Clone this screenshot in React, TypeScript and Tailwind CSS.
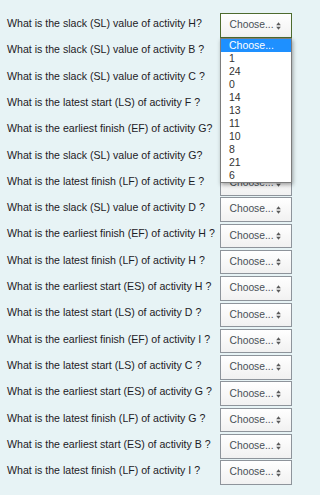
import React from "react";

const rows = [
  "What is the slack (SL) value of activity H?",
  "What is the slack (SL) value of activity B ?",
  "What is the slack (SL) value of activity C ?",
  "What is the latest start (LS) of activity F ?",
  "What is the earliest finish (EF) of activity G?",
  "What is the slack (SL) value of activity G?",
  "What is the latest finish (LF) of activity E ?",
  "What is the slack (SL) value of activity D ?",
  "What is the earliest finish (EF) of activity H ?",
  "What is the latest finish (LF) of activity H ?",
  "What is the earliest start (ES) of activity H ?",
  "What is the latest start (LS) of activity D ?",
  "What is the earliest finish (EF) of activity I ?",
  "What is the latest start (LS) of activity C ?",
  "What is the earliest start (ES) of activity G ?",
  "What is the latest finish (LF) of activity G ?",
  "What is the earliest start (ES) of activity B ?",
  "What is the latest finish (LF) of activity I ?",
];

const options = ["Choose...", "1", "24", "0", "14", "13", "11", "10", "8", "21", "6"];

function Arrows() {
  return (
    <svg width="5" height="8" viewBox="0 0 5 8" className="shrink-0">
      <path d="M2.5 0.3 L4.8 3.2 L0.2 3.2 Z" fill="#5a5a5a" />
      <path d="M2.5 7.7 L4.8 4.8 L0.2 4.8 Z" fill="#5a5a5a" />
    </svg>
  );
}

function FakeSelect({ focused }: { focused?: boolean }) {
  return (
    <div
      className={
        "w-[72px] h-[24.5px] shrink-0 flex items-center justify-between pl-[8.5px] pr-[10px] border bg-gradient-to-b from-white to-[#f1f1f1] " +
        (focused ? "border-[#4d6b2e]" : "border-[#8e949b]")
      }
    >
      <span className="text-[10.3px] text-[#495057] leading-none">Choose...</span>
      <Arrows />
    </div>
  );
}

export default function App() {
  return (
    <div
      className="relative w-[320px] h-[495px] bg-[#e7f3f5] overflow-hidden pl-[7px] pt-[13.3px]"
      style={{ fontFamily: '"Liberation Sans", Arial, sans-serif' }}
    >
      {rows.map((r, i) => (
        <div key={i} className="flex items-start h-[26.3px]">
          <div className="w-[213px] shrink-0 text-[10.6px] leading-[12px] pt-[3.8px] text-[#1d2125] whitespace-nowrap">
            {r}
          </div>
          <FakeSelect focused={i === 0} />
        </div>
      ))}
      <div className="absolute left-[220px] top-[37.7px] w-[72px] bg-white border border-[#7c7c7c] shadow-[1px_2px_4px_rgba(0,0,0,0.35)] z-10">
        {options.map((o, i) => (
          <div
            key={i}
            className={
              "h-[13px] text-[10.5px] leading-[13px] pl-[8px] " +
              (i === 0 ? "bg-[#1e90ff] text-white" : "text-[#333]")
            }
          >
            {o}
          </div>
        ))}
      </div>
    </div>
  );
}
